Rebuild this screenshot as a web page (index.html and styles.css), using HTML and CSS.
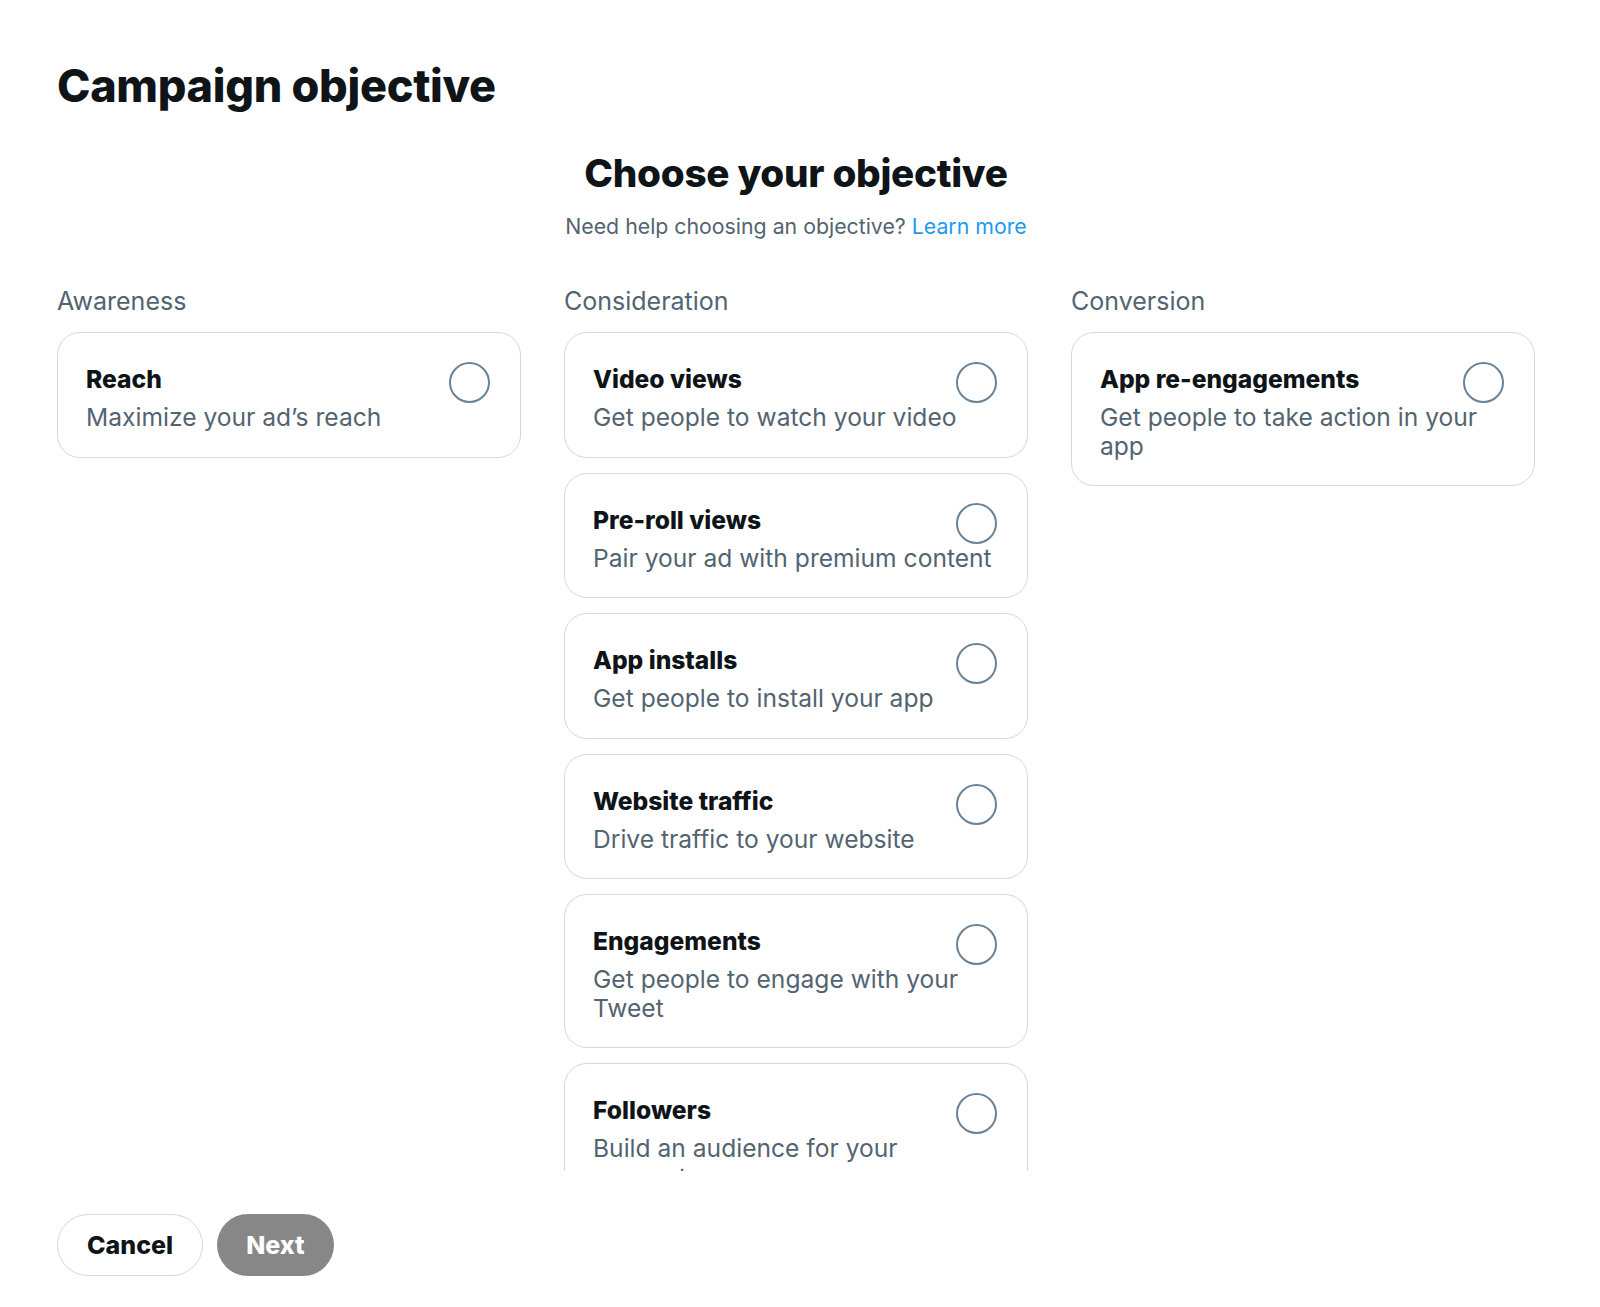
FILE: index.html
```html
<!DOCTYPE html>
<html lang="en">
<head>
    <meta charset="UTF-8">
    <meta name="viewport" content="width=device-width, initial-scale=1.0">
    <title>Campaign objective</title>
    <link rel="stylesheet" href="styles.css">
</head>
<body>
    <div class="page">
        <h1>Campaign objective</h1>
        <div class="content">
            <h2>Choose your objective</h2>
            <p class="help">Need help choosing an objective? <a href="#">Learn more</a></p>
            <div class="columns">
                <div class="column">
                    <div class="column-label">Awareness</div>
                    <label class="card">
                        <div class="card-title">Reach</div>
                        <span class="radio"></span>
                        <div class="card-desc">Maximize your ad’s reach</div>
                    </label>
                </div>
                <div class="column">
                    <div class="column-label">Consideration</div>
                    <label class="card">
                        <div class="card-title">Video views</div>
                        <span class="radio"></span>
                        <div class="card-desc">Get people to watch your video</div>
                    </label>
                    <label class="card">
                        <div class="card-title">Pre-roll views</div>
                        <span class="radio"></span>
                        <div class="card-desc">Pair your ad with premium content</div>
                    </label>
                    <label class="card">
                        <div class="card-title">App installs</div>
                        <span class="radio"></span>
                        <div class="card-desc">Get people to install your app</div>
                    </label>
                    <label class="card">
                        <div class="card-title">Website traffic</div>
                        <span class="radio"></span>
                        <div class="card-desc">Drive traffic to your website</div>
                    </label>
                    <label class="card">
                        <div class="card-title">Engagements</div>
                        <span class="radio"></span>
                        <div class="card-desc">Get people to engage with your Tweet</div>
                    </label>
                    <label class="card">
                        <div class="card-title">Followers</div>
                        <span class="radio"></span>
                        <div class="card-desc">Build an audience for your<br>account</div>
                    </label>
                </div>
                <div class="column">
                    <div class="column-label">Conversion</div>
                    <label class="card">
                        <div class="card-title">App re-engagements</div>
                        <span class="radio"></span>
                        <div class="card-desc">Get people to take action in your app</div>
                    </label>
                </div>
            </div>
        </div>
        <div class="footer">
            <button class="btn btn-cancel">Cancel</button>
            <button class="btn btn-next" disabled>Next</button>
        </div>
    </div>
</body>
</html>
```

FILE: styles.css
```css
body {
    margin: 0;
    font-family: Inter, "Liberation Sans", Arial, sans-serif;
    background: #fff;
    color: #0f1419;
}
.page {
    padding: 56px 65px 0 57px;
}
h1 {
    margin: 0;
    font-size: 45px;
    line-height: 60px;
    font-weight: 800;
    letter-spacing: -0.3px;
}
.content {
    height: 1055px;
    overflow: hidden;
}
h2 {
    margin: 34px 0 0 0;
    text-align: center;
    font-size: 38.7px;
    line-height: 46px;
    font-weight: 800;
    letter-spacing: -0.3px;
}
.help {
    margin: 15px 0 0 0;
    text-align: center;
    font-size: 21.3px;
    line-height: 30px;
    color: #536471;
}
.help a {
    color: #1d9bf0;
    text-decoration: none;
}
.columns {
    display: grid;
    grid-template-columns: 1fr 1fr 1fr;
    gap: 43px;
    margin-top: 45px;
    align-items: start;
}
.column {
    display: flex;
    flex-direction: column;
    gap: 15px;
}
.column-label {
    font-size: 25px;
    line-height: 30px;
    color: #536471;
    margin-bottom: 1px;
}
.card {
    display: grid;
    grid-template-columns: 1fr auto;
    column-gap: 12px;
    border: 1.5px solid #cfd9de;
    border-radius: 23px;
    padding: 28px 27px 25px 28px;
    cursor: pointer;
}
.card-title {
    grid-column: 1;
    grid-row: 1;
    font-size: 24.6px;
    line-height: 36px;
    font-weight: 800;
}
.radio {
    grid-column: 2;
    grid-row: 1;
    width: 37px;
    height: 37px;
    border: 2px solid #6a8296;
    border-radius: 50%;
    margin: 1px 3px -6px 0;
}
.card-desc {
    grid-column: 1 / -1;
    grid-row: 2;
    margin-top: 6px;
    font-size: 24.6px;
    line-height: 28.5px;
    color: #536471;
}
.footer {
    display: flex;
    gap: 14px;
    margin-top: 43px;
}
.btn {
    font-family: inherit;
    height: 62px;
    padding: 0 29px;
    border-radius: 31px;
    font-size: 25px;
    font-weight: 800;
}
.btn-cancel {
    background: #fff;
    border: 1.5px solid #cfd9de;
    color: #0f1419;
}
.btn-next {
    background: #878787;
    border: none;
    color: #fff;
}
```
